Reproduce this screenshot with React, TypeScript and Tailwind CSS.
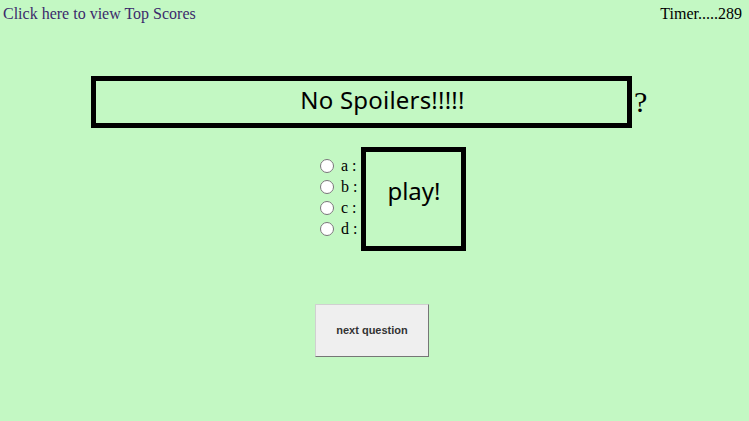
export default function App() {
  return (
    <div className="min-h-[421px] w-full bg-[#c3f8c3] font-['Liberation_Serif',serif] text-black">
      <div className="flex justify-between px-[3px] pt-[5px] text-[16px] leading-[18px]">
        <a href="#" className="text-[#3b2a6b]">
          Click here to view Top Scores
        </a>
        <span className="pr-[4px]">Timer.....289</span>
      </div>

      <div className="mt-[53px] ml-[91px] flex items-center">
        <div className="flex h-[52px] w-[541px] items-center justify-center border-[5px] border-black pb-[5px] pl-[42px] font-['Noto_Sans',sans-serif] text-[24px] tracking-[0.2px]">
          No Spoilers!!!!!
        </div>
        <span className="ml-[2px] font-['Liberation_Serif',serif] text-[30px] leading-none">?</span>
      </div>

      <div className="mt-[19px] ml-[318px] flex items-center">
        <div className="flex flex-col pb-[4px]">
          {["a", "b", "c", "d"].map((k) => (
            <label key={k} className="flex h-[21px] items-center text-[16px]">
              <input type="radio" name="ans" className="m-0 mr-[7px] ml-[2px] h-[14px] w-[14px]" />
              {k} :
            </label>
          ))}
        </div>
        <div className="ml-[4px] h-[104px] w-[105px] border-[5px] border-black pt-[23px] text-center font-['Noto_Sans',sans-serif] text-[24px] leading-[32px]">
          play!
        </div>
      </div>

      <button className="mt-[53px] ml-[315px] h-[53px] w-[114px] border border-[#767676] border-t-[#d0d0d0] border-l-[#d0d0d0] bg-[#efefef] font-['Liberation_Sans',sans-serif] text-[11px] font-bold text-[#333]">
        next question
      </button>
    </div>
  );
}
